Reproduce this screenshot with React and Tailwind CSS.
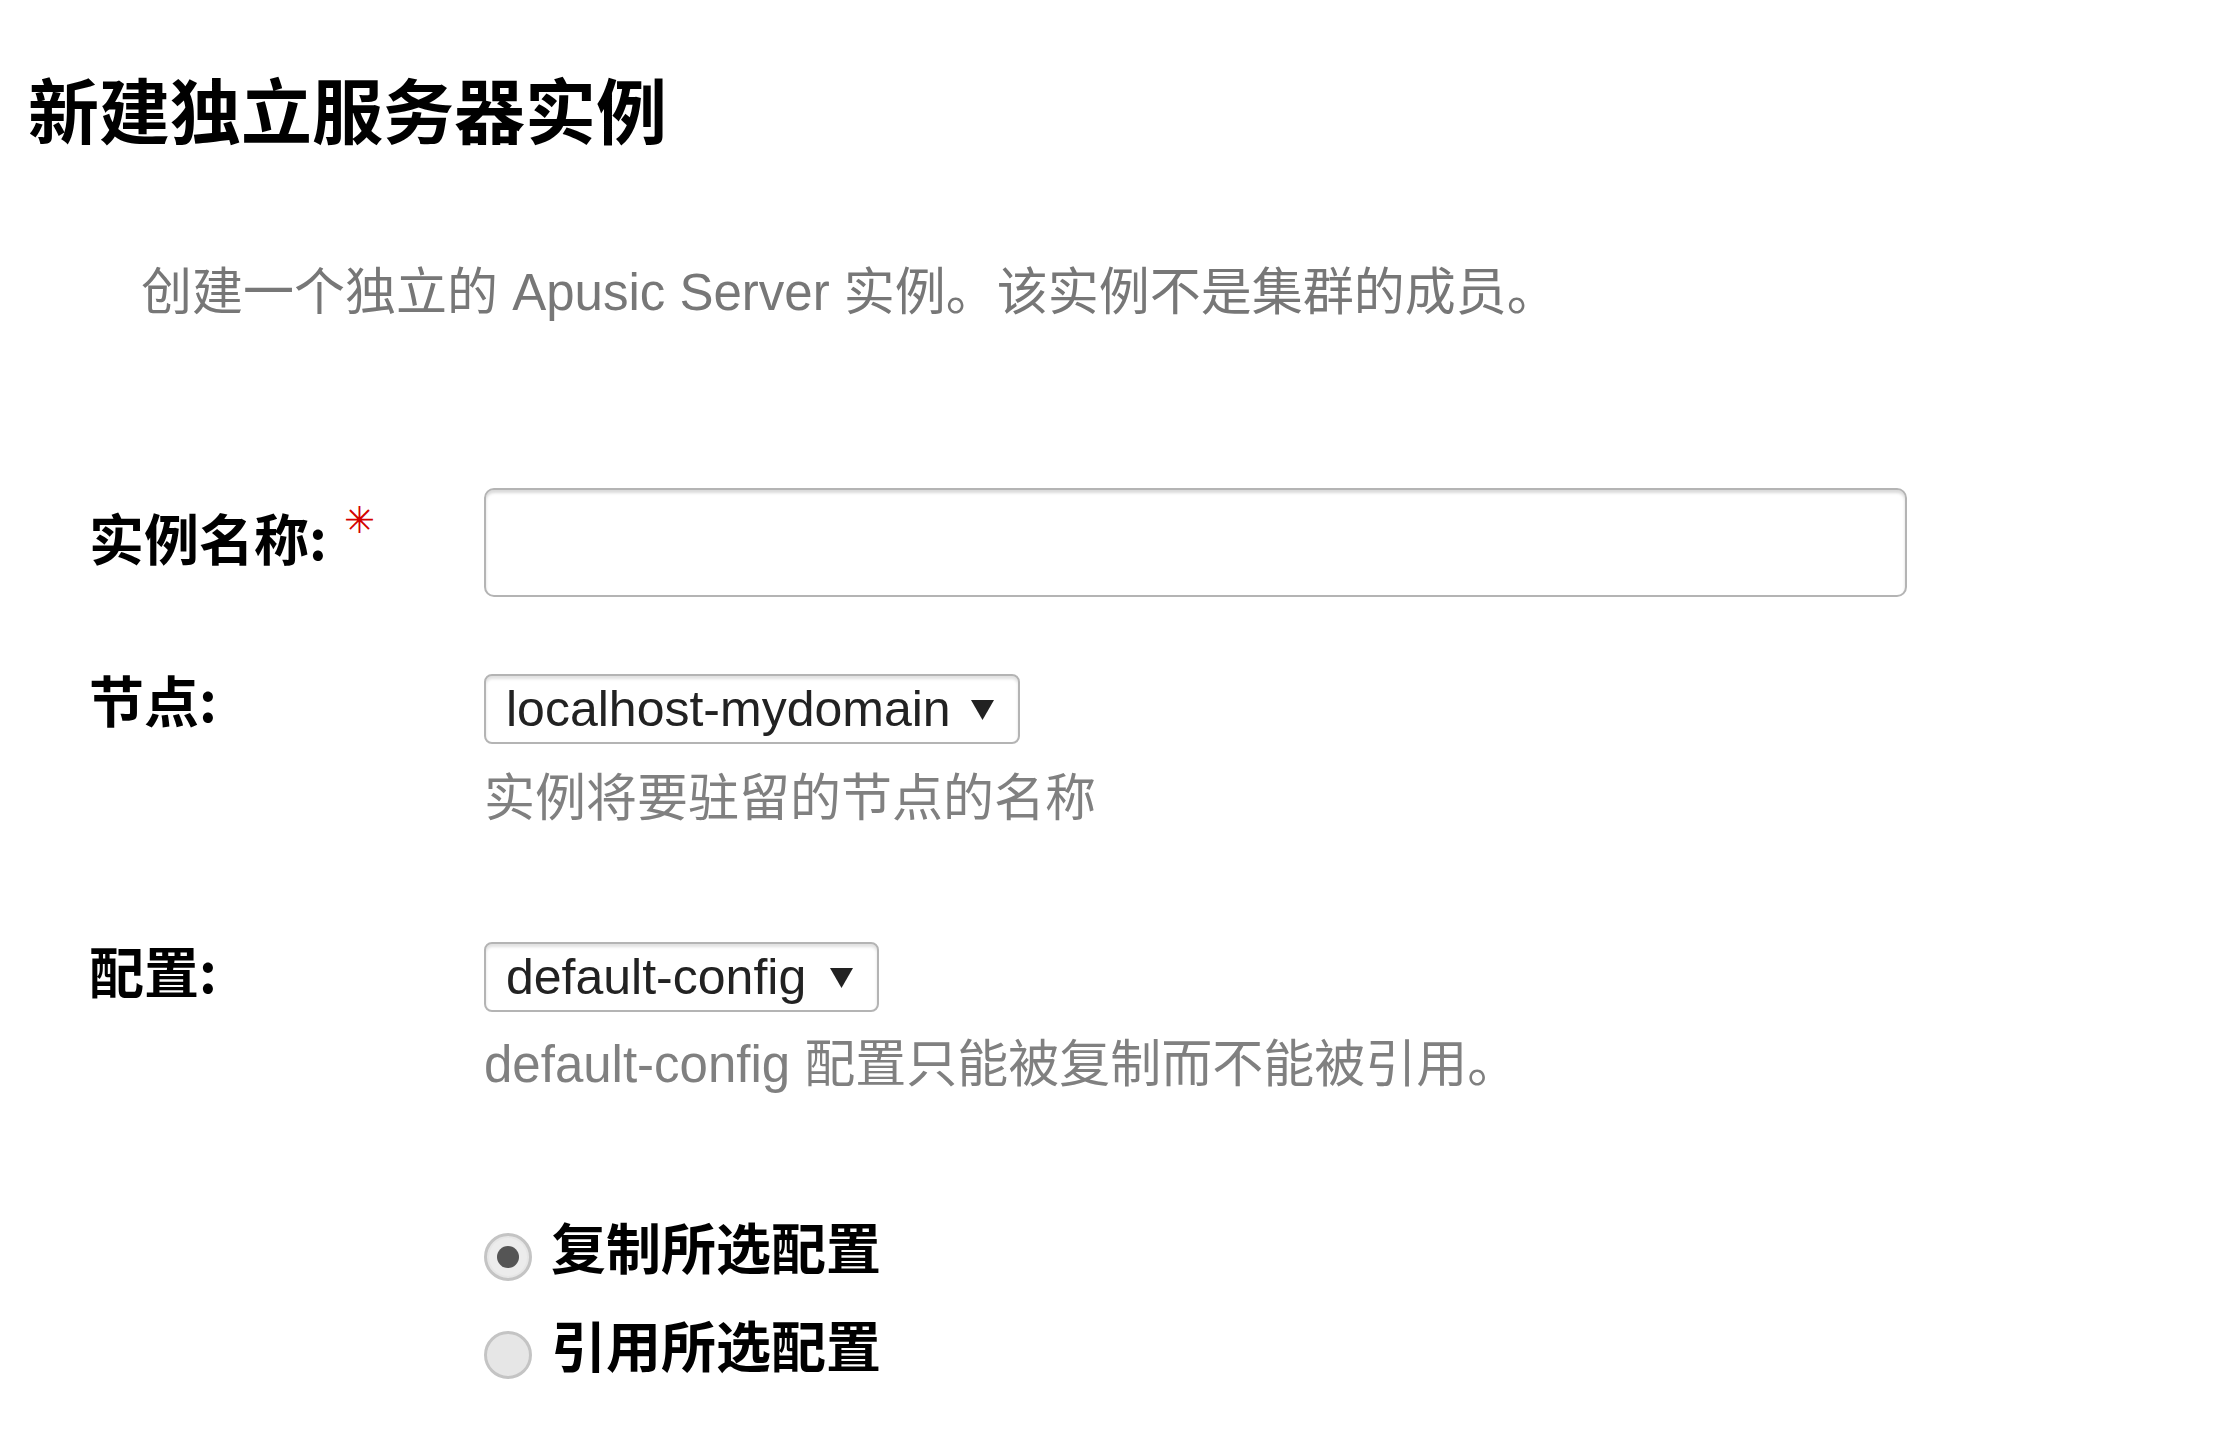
import { useState } from "react";

// Small drop-down arrow used by both selects
const Arrow = () => (
  <svg width="23" height="21" viewBox="0 0 23 21" className="shrink-0">
    <polygon points="0,1 23,1 11.5,21" fill="#222" />
  </svg>
);

const FakeSelect = ({ value, width }) => (
  <div
    className={`flex h-[70px] items-center justify-between rounded-[8px] border-2 border-[#b4b4b4] bg-white pl-[20px] pr-[24px] shadow-[inset_0_3px_3px_rgba(0,0,0,0.12)] ${width}`}
  >
    <span className="font-['Liberation_Sans',sans-serif] text-[50px] leading-none text-[#222]">
      {value}
    </span>
    <Arrow />
  </div>
);

const Radio = ({ checked, label, onClick }) => (
  <div className="flex items-start cursor-pointer" onClick={onClick}>
    <div className="mt-[15px] flex h-[48px] w-[48px] items-center justify-center rounded-full border-[3px] border-[#c4c4c4] bg-[#e6e6e6]">
      {checked && (
        <div className="flex h-[38px] w-[38px] items-center justify-center rounded-full bg-[#ececec]">
          <div className="h-[22px] w-[22px] rounded-full bg-[#555]" />
        </div>
      )}
    </div>
    <span className="ml-[19px] font-['Noto_Sans_CJK_SC',sans-serif] text-[55px] font-bold leading-none text-black">
      {label}
    </span>
  </div>
);

export default function App() {
  const [mode, setMode] = useState("copy");

  return (
    <div className="min-h-screen bg-white pl-[28px] pt-[72px]">
      {/* Titulo */}
      <h1 className="font-['Noto_Sans_CJK_SC',sans-serif] text-[71px] font-bold leading-none text-black">
        新建独立服务器实例
      </h1>
      <p className="ml-[113px] mt-[124px] font-['Liberation_Sans','Noto_Sans_CJK_SC',sans-serif] text-[51px] leading-none text-[#777]">
        创建一个独立的 Apusic Server 实例。该实例不是集群的成员。
      </p>

      {/* Formulario */}
      <div className="ml-[61px] mt-[170px]">
        <div className="flex items-start">
          <div className="flex w-[395px] shrink-0 items-start">
            <span className="mt-[21px] font-['Noto_Sans_CJK_SC',sans-serif] text-[55px] font-bold leading-none text-black">
              实例名称:
            </span>
            <span className="ml-[17px] mt-[14px] font-['DejaVu_Sans',sans-serif] text-[37px] font-bold leading-none text-[#d40000]">
              ✳
            </span>
          </div>
          <input
            type="text"
            className="h-[109px] w-[1423px] rounded-[10px] border-2 border-[#b4b4b4] bg-white px-4 text-[50px] shadow-[inset_0_3px_3px_rgba(0,0,0,0.15)] outline-none"
          />
        </div>

        <div className="mt-[77px] flex items-start">
          <div className="w-[395px] shrink-0">
            <span className="-mt-[3px] block font-['Noto_Sans_CJK_SC',sans-serif] text-[55px] font-bold leading-none text-black">
              节点:
            </span>
          </div>
          <div>
            <FakeSelect value="localhost-mydomain" width="w-[536px]" />
            <p className="mt-[29px] font-['Liberation_Sans','Noto_Sans_CJK_SC',sans-serif] text-[51px] leading-none text-[#808080]">
              实例将要驻留的节点的名称
            </p>
          </div>
        </div>

        <div className="mt-[118px] flex items-start">
          <div className="w-[395px] shrink-0">
            <span className="block font-['Noto_Sans_CJK_SC',sans-serif] text-[55px] font-bold leading-none text-black">
              配置:
            </span>
          </div>
          <div>
            <FakeSelect value="default-config" width="w-[395px]" />
            <p className="mt-[27px] font-['Liberation_Sans','Noto_Sans_CJK_SC',sans-serif] text-[51px] leading-none text-[#808080]">
              default-config 配置只能被复制而不能被引用。
            </p>
          </div>
        </div>

        <div className="ml-[395px] mt-[128px] flex flex-col gap-[35px]">
          <Radio
            checked={mode === "copy"}
            label="复制所选配置"
            onClick={() => setMode("copy")}
          />
          <Radio
            checked={mode === "ref"}
            label="引用所选配置"
            onClick={() => setMode("ref")}
          />
        </div>
      </div>
    </div>
  );
}
